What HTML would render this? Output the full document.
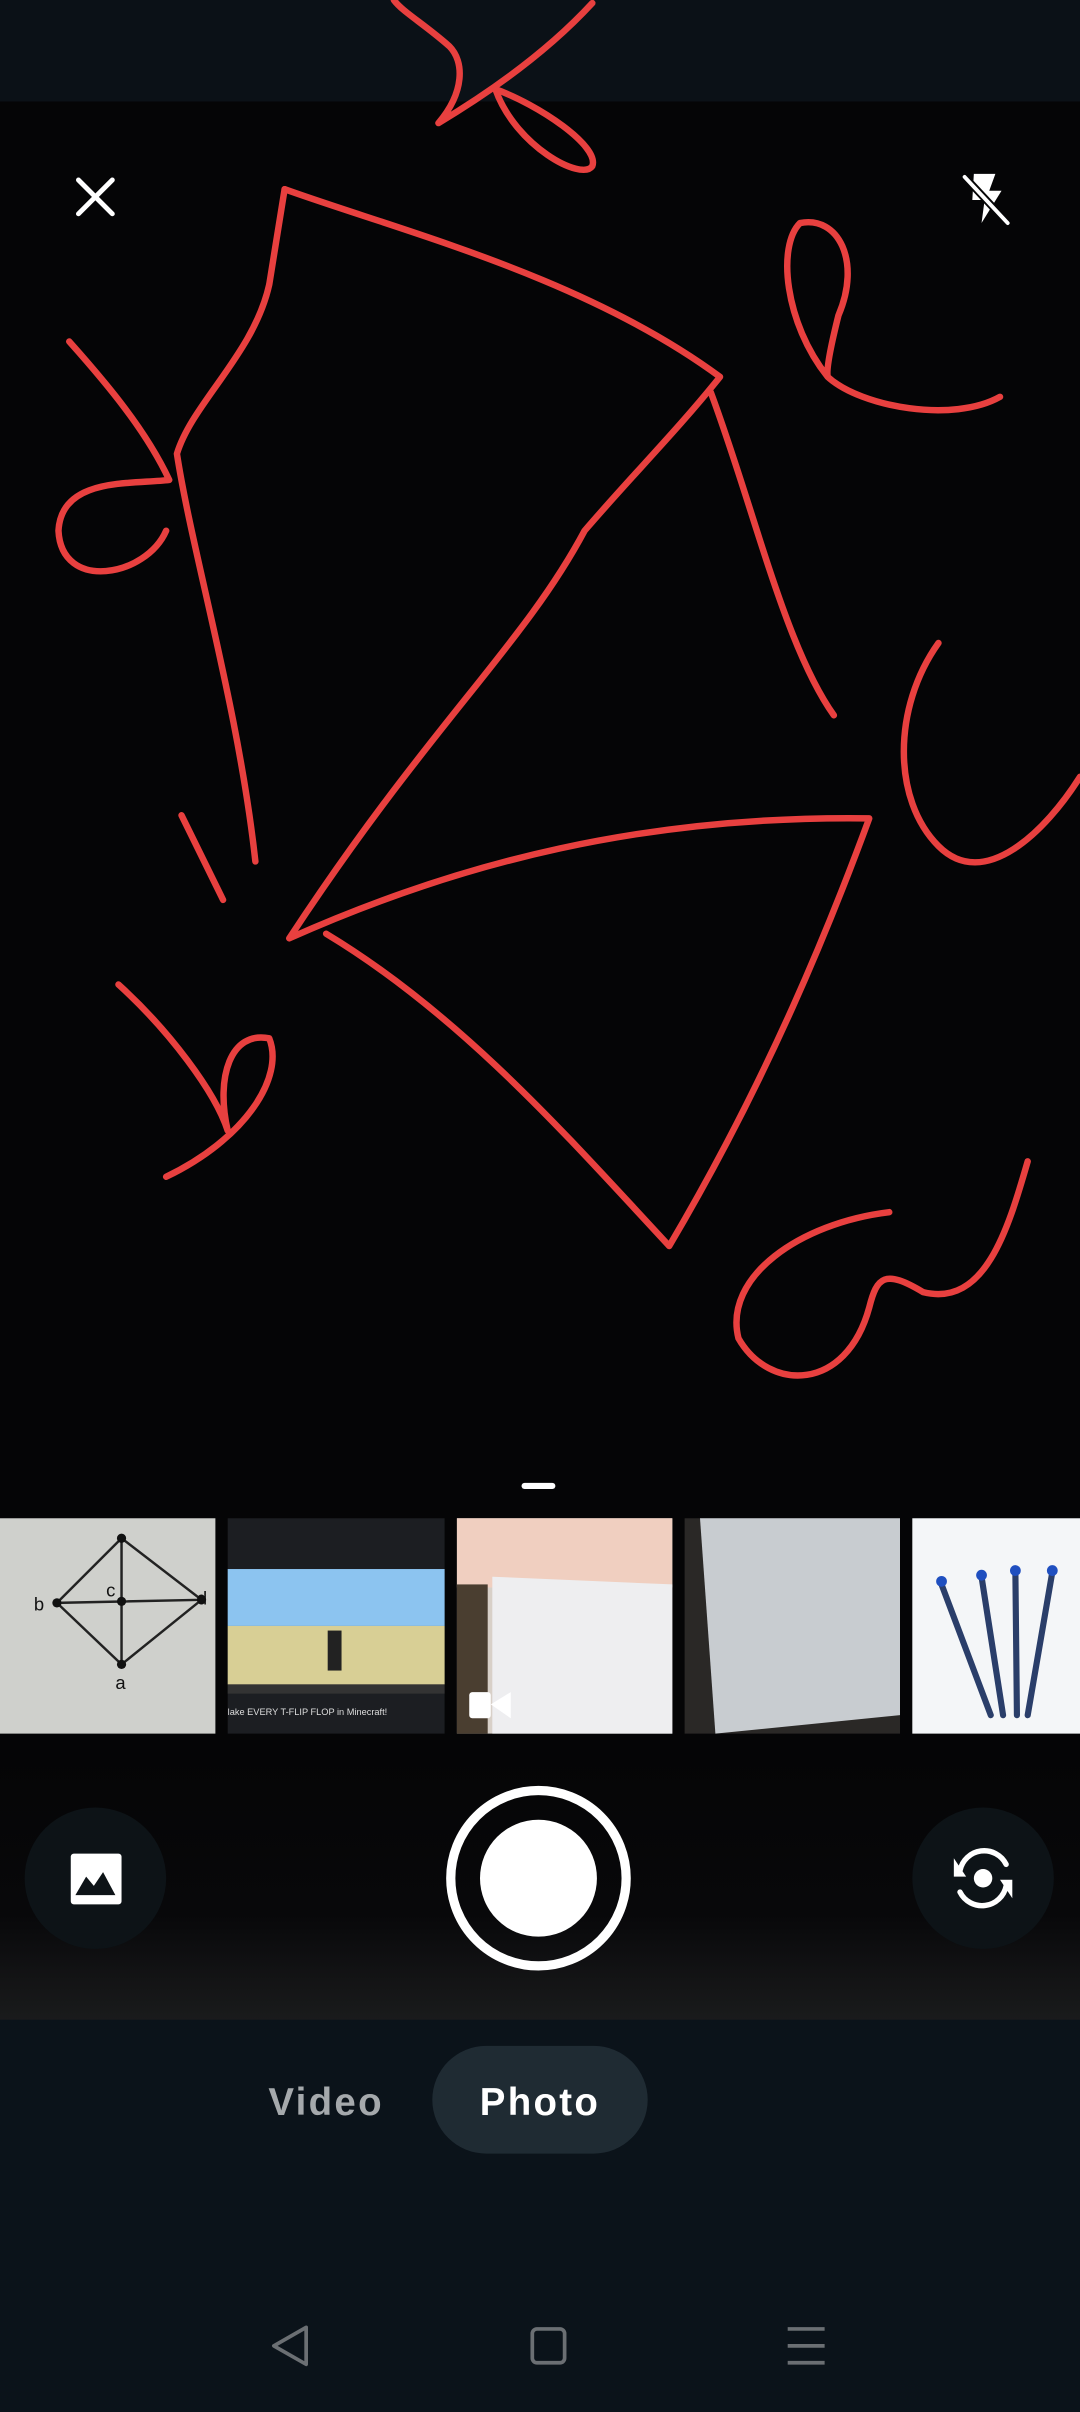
<!DOCTYPE html>
<html><head><meta charset="utf-8"><style>
html,body{margin:0;padding:0;background:#000;}
svg{display:block;width:1080px;height:2412px;}
text{font-family:"Liberation Sans",sans-serif;}
</style></head><body>
<svg viewBox="0 0 702 1568" preserveAspectRatio="none" xmlns="http://www.w3.org/2000/svg">
<defs>
<linearGradient id="bg" x1="0" y1="0" x2="0" y2="1">
<stop offset="0" stop-color="#050506"/><stop offset="0.6" stop-color="#08080a"/><stop offset="1" stop-color="#1a1b1c"/>
</linearGradient>
</defs>
<rect x="0" y="0" width="702" height="66" fill="#0b1117"/>
<rect x="0" y="66" width="702" height="1080" fill="#050506"/>
<rect x="0" y="1140" width="702" height="174" fill="url(#bg)"/>
<rect x="0" y="1313" width="702" height="255" fill="#0b131a"/>

<g fill="none" stroke="#e8403f" stroke-width="4.2" stroke-linecap="round" stroke-linejoin="round">
<path d="M385,2 C350,40 305,68 285,80 C302,60 302,40 292,30 C275,15 262,8 256,0"/>
<path d="M322,58 C350,68 390,95 385,108 C378,118 335,95 322,58"/>
<path d="M185,123 L175,185 C165,230 125,262 115,295 C125,360 155,460 166,560"/>
<path d="M185,123 C260,150 380,180 468,245 C440,280 410,310 380,345 C340,420 280,470 188,610 C300,560 420,530 565,532 C540,600 500,700 435,810 C370,740 300,660 212,607"/>
<path d="M462,255 C490,330 510,420 542,465"/>
<path d="M45,222 C70,250 95,280 110,312 C85,315 40,310 38,345 C40,385 95,375 108,345"/>
<path d="M118,530 L145,585"/>
<path d="M77,640 C110,670 140,710 148,735 C140,700 150,670 175,675 C185,700 160,740 108,765"/>
<path d="M538,245 C510,210 505,160 520,145 C545,140 560,170 545,205 C540,225 537,240 538,245 C560,265 620,275 650,258"/>
<path d="M610,418 C580,460 580,520 610,550 C640,580 680,540 702,505"/>
<path d="M578,788 C520,795 470,830 480,870 C500,905 550,905 565,850 C570,830 575,825 600,840 C640,850 655,800 668,755"/>
</g>

<g stroke="#fff" stroke-width="3.2" stroke-linecap="round">
<path d="M51,117 L73,139 M73,117 L51,139"/>
</g>
<g fill="#fff">
<path d="M633,113 L647,113 L643,124 L651,124 L638,145 L640,130 L632,130 Z"/>
</g>
<path d="M627,115 L655,145" stroke="#050506" stroke-width="5"/>
<path d="M627,115 L655,145" stroke="#fff" stroke-width="2.5" stroke-linecap="round"/>

<rect x="339" y="964" width="22" height="4" rx="2" fill="#fff"/>

<rect x="0" y="987" width="140" height="140" fill="#cfd0cc"/>
<g stroke="#222" stroke-width="1.6" fill="none">
<path d="M79,1000 L37,1042 L79,1082 L131,1040 Z M79,1000 L79,1082 M37,1042 L131,1040"/>
</g>
<g fill="#111"><circle cx="79" cy="1000" r="3"/><circle cx="37" cy="1042" r="3"/><circle cx="79" cy="1041" r="3"/><circle cx="131" cy="1040" r="3"/><circle cx="79" cy="1082" r="3"/>
<text x="22" y="1047" font-size="12">b</text><text x="69" y="1038" font-size="12">c</text><text x="128" y="1043" font-size="12">d</text><text x="75" y="1098" font-size="12">a</text></g>

<rect x="148" y="987" width="141" height="140" fill="#1c1e22"/>
<rect x="148" y="1020" width="141" height="37" fill="#8cc4f0"/>
<rect x="148" y="1057" width="141" height="38" fill="#d8cf95"/>
<rect x="213" y="1060" width="9" height="26" fill="#222"/>
<rect x="148" y="1095" width="141" height="6" fill="#333"/>
<text x="148" y="1115" font-size="6" fill="#ddd">lake EVERY T-FLIP FLOP in Minecraft!</text>

<rect x="297" y="987" width="140" height="140" fill="#d8d0c8"/>
<rect x="297" y="987" width="140" height="45" fill="#f0cfc0"/>
<rect x="297" y="1030" width="20" height="97" fill="#4a3e30"/>
<path d="M320,1025 L437,1030 L437,1127 L320,1127 Z" fill="#eeeef0"/>
<rect x="305" y="1100" width="14" height="17" rx="2" fill="#fff"/>
<path d="M319,1108 L332,1100 L332,1117 Z" fill="#fff"/>

<rect x="445" y="987" width="140" height="140" fill="#2a2826"/>
<path d="M455,987 L585,987 L585,1115 L465,1127 Z" fill="#c8ccd0"/>
<rect x="593" y="987" width="109" height="140" fill="#f4f6f8"/>
<g stroke="#2a3e6a" stroke-width="4" stroke-linecap="round">
<path d="M612,1030 L644,1115 M638,1025 L652,1115 M660,1022 L661,1115 M684,1022 L668,1115"/>
</g>
<g fill="#1f4fc0"><circle cx="612" cy="1028" r="3.5"/><circle cx="638" cy="1024" r="3.5"/><circle cx="660" cy="1021" r="3.5"/><circle cx="684" cy="1021" r="3.5"/></g>

<circle cx="62" cy="1221" r="46" fill="#0d1317"/>
<rect x="46" y="1205" width="33" height="33" rx="2" fill="#fff"/>
<path d="M49,1232 L56,1220 L61,1226 L67,1217 L75,1232 Z" fill="#0d1317"/>
<circle cx="350" cy="1221" r="57" fill="none" stroke="#fff" stroke-width="6"/>
<circle cx="350" cy="1221" r="38" fill="#fff"/>
<circle cx="639" cy="1221" r="46" fill="#0d1317"/>
<g fill="none" stroke="#fff" stroke-width="3.5" stroke-linecap="round">
<path d="M624,1216 A16,16 0 0 1 654,1212"/>
<path d="M654,1226 A16,16 0 0 1 624,1230"/>
</g>
<path d="M620,1208 L628,1220 L620,1220 Z" fill="#fff"/>
<path d="M658,1234 L650,1222 L658,1222 Z" fill="#fff"/>
<circle cx="639" cy="1221" r="6" fill="#fff"/>

<rect x="281" y="1330" width="140" height="70" rx="35" fill="#1f2b33"/>
<text x="212" y="1375" font-size="25" font-weight="600" fill="#a5a9ac" text-anchor="middle" letter-spacing="1.5">Video</text>
<text x="351" y="1375" font-size="25" font-weight="600" fill="#fff" text-anchor="middle" letter-spacing="1.5">Photo</text>

<g fill="none" stroke="#6b6f73" stroke-width="2.4" stroke-linejoin="round">
<path d="M199,1513 L178,1525 L199,1537 Z"/>
<rect x="346" y="1514" width="21" height="22" rx="3"/>
<path d="M512,1514 L536,1514 M512,1525 L536,1525 M512,1536 L536,1536"/>
</g>
</svg>
</body></html>
